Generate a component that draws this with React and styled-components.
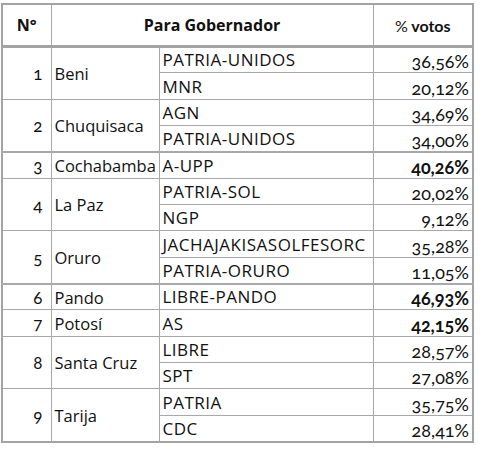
import styled, { createGlobalStyle } from 'styled-components';

const data = [
  { n: 1, dep: "Beni", rows: [["PATRIA-UNIDOS", "36,56%"], ["MNR", "20,12%"]] },
  { n: 2, dep: "Chuquisaca", rows: [["AGN", "34,69%"], ["PATRIA-UNIDOS", "34,00%"]] },
  { n: 3, dep: "Cochabamba", rows: [["A-UPP", "40,26%", true]], thick: true },
  { n: 4, dep: "La Paz", rows: [["PATRIA-SOL", "20,02%"], ["NGP", "9,12%"]] },
  { n: 5, dep: "Oruro", rows: [["JACHAJAKISASOLFESORC", "35,28%"], ["PATRIA-ORURO", "11,05%"]] },
  { n: 6, dep: "Pando", rows: [["LIBRE-PANDO", "46,93%", true]], thick: true },
  { n: 7, dep: "Potosí", rows: [["AS", "42,15%", true]] },
  { n: 8, dep: "Santa Cruz", rows: [["LIBRE", "28,57%"], ["SPT", "27,08%"]] },
  { n: 9, dep: "Tarija", rows: [["PATRIA", "35,75%"], ["CDC", "28,41%"]] },
];

export default function App() {
  return (
    <>
      <Global />
      <Page>
        <Table>
          <colgroup>
            <col style={{ width: 49 }} />
            <col style={{ width: 108 }} />
            <col style={{ width: 214 }} />
            <col style={{ width: 100 }} />
          </colgroup>
          <thead>
            <tr>
              <Head>N°</Head>
              <Head colSpan={2}>Para Gobernador</Head>
              <Head $votes><span className="pct">%</span> votos</Head>
            </tr>
          </thead>
          <tbody>
            {data.map(d => d.rows.map((r, i) => (
              <Row key={d.n + "-" + i} $thick={d.thick && i === 0}>
                {i === 0 && <Num rowSpan={d.rows.length}>{d.n}</Num>}
                {i === 0 && <Dep rowSpan={d.rows.length}>{d.dep}</Dep>}
                <Party>{r[0]}</Party>
                <Pct $bold={r[2]}>{r[1]}</Pct>
              </Row>
            )))}
          </tbody>
        </Table>
      </Page>
    </>
  );
}

const Global = createGlobalStyle`
  body {
    margin: 0;
    background: white;
  }
`;

const Page = styled.div`
  padding: 3px 0 0 1px;
`;

const Table = styled.table`
  border-collapse: collapse;
  table-layout: fixed;
  width: 472px;
  border: 2px solid #a3a3a3;
  color: #111;
  font-family: 'Open Sans', sans-serif;
  font-size: 17px;

  td, th {
    border: 1px solid #a8a8a8;
    padding: 0 4px;
    white-space: nowrap;
  }

  tbody tr:last-child td {
    border-bottom: 2px solid #a3a3a3;
  }
`;

const Head = styled.th`
  height: 40px;
  font-size: 16px;
  font-family: ${p => p.$votes ? "'Lato', sans-serif" : "'Open Sans', sans-serif"};
  font-weight: 700;
  text-align: center;
  border-bottom: 3px solid #a3a3a3 !important;

  .pct {
    font-weight: 400;
  }
`;

const Row = styled.tr`
  height: 26.35px;

  td {
    border-top-width: ${p => p.$thick ? "2px" : "1px"};
  }
`;

const Num = styled.td`
  text-align: right;
  vertical-align: middle;
  font-family: 'Lato', sans-serif;
  font-variant-numeric: oldstyle-nums;
  font-size: 17px;
  padding: 0 8px 0 0 !important;
`;

const Dep = styled.td`
  vertical-align: middle;
  font-size: 16.5px;
  padding: 0 3px !important;
`;

const Party = styled.td`
  vertical-align: bottom;
  padding: 0 3px 1px !important;
  line-height: 22px;
  letter-spacing: 0.5px;
`;

const Pct = styled.td`
  vertical-align: bottom;
  text-align: right;
  font-family: 'Lato', sans-serif;
  font-variant-numeric: oldstyle-nums;
  font-size: 18px;
  font-weight: ${p => p.$bold ? 700 : 400};
  line-height: 22px;
  padding: 0 3px 0 0 !important;
`;
